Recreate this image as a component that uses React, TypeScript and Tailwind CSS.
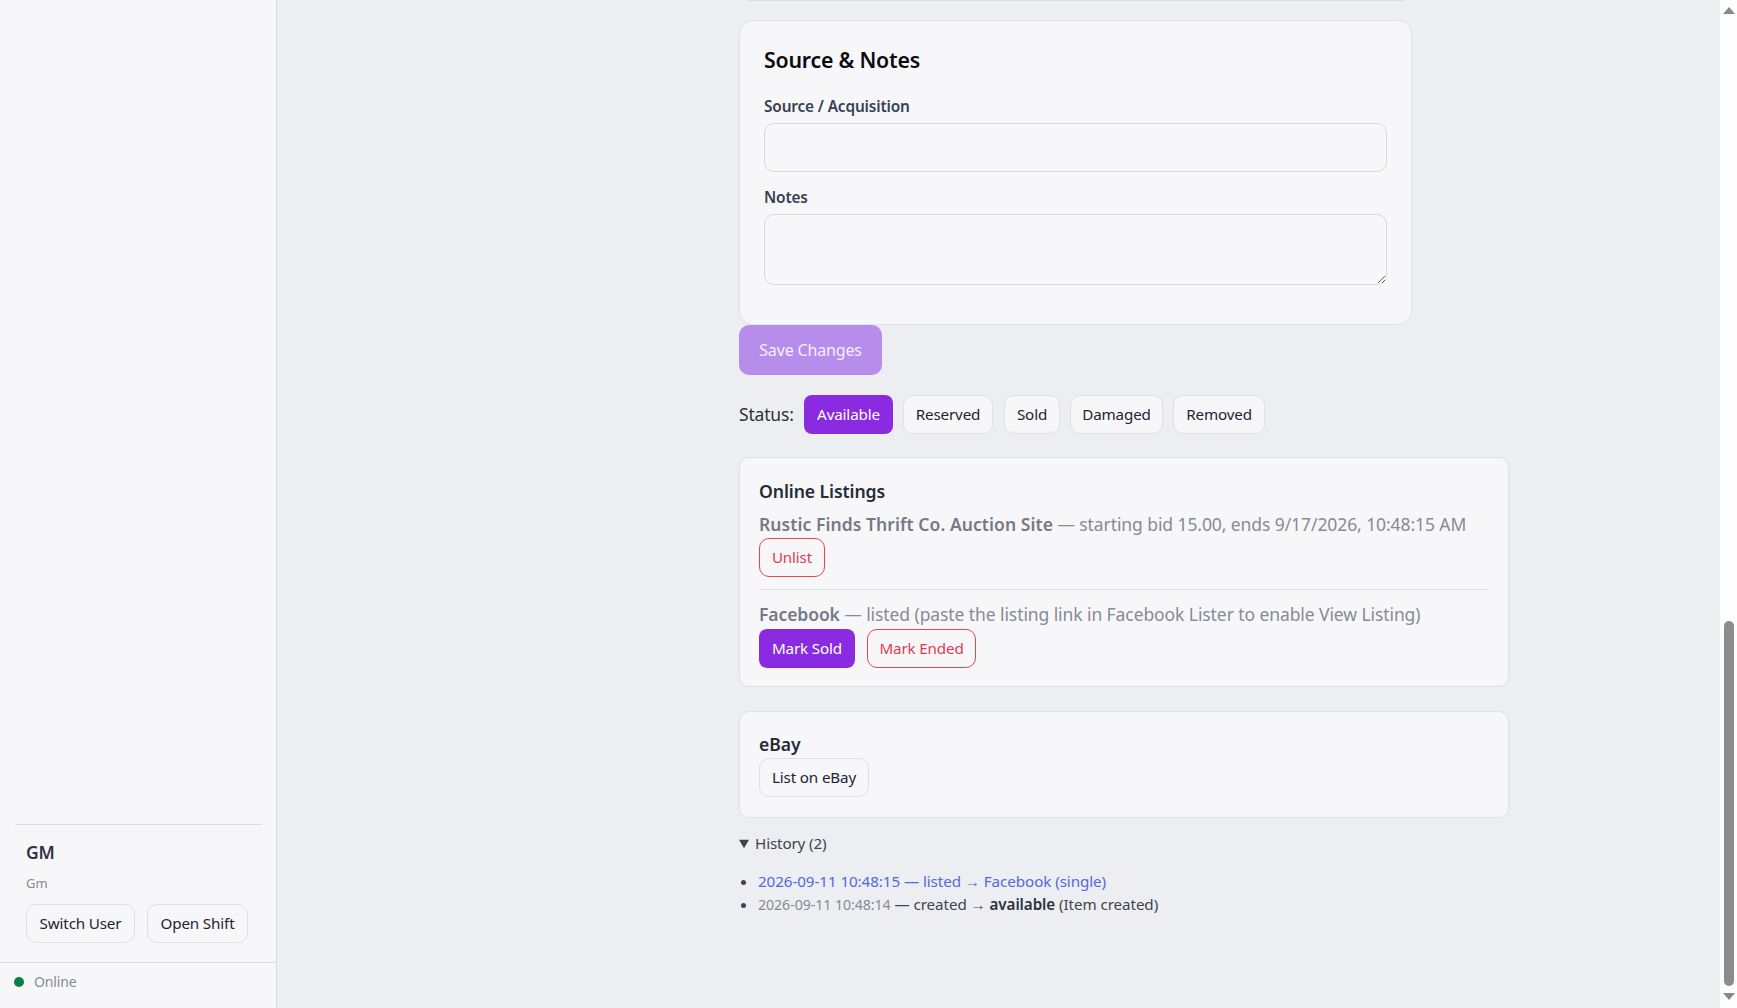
export default function App() {
  const fontFamily = { fontFamily: '"Noto Sans", "Liberation Sans", sans-serif' };
  return (
    <div className="flex h-screen w-full overflow-hidden bg-[#eceef2] text-[#1f2430]" style={fontFamily}>
      <aside className="flex h-full w-[277px] shrink-0 flex-col justify-end border-r border-[#dcdde2] bg-[#f7f7fa]">
        <div className="mr-[14px] ml-[15px] h-[138px] border-t border-[#dcdde2] pr-[12px] pl-[11px]">
          <div className="mt-[15px] h-[24px] text-[17.5px] leading-[24px] font-semibold tracking-[-0.01em] text-[#2f3344]">GM</div>
          <div className="mt-[7px] h-[24px] text-[13px] leading-[24px] text-[#868b94]">Gm</div>
          <div className="mt-[9px] flex gap-[12px]">
            <button className="h-[39px] w-[109px] rounded-[10px] border border-[#dfe0e5] bg-[#f7f7fa] text-[15.2px] tracking-[-0.01em] text-[#1f2430]">Switch User</button>
            <button className="h-[39px] w-[101px] rounded-[10px] border border-[#dfe0e5] bg-[#f7f7fa] text-[15.2px] tracking-[-0.01em] text-[#1f2430]">Open Shift</button>
          </div>
        </div>
        <div className="flex h-[46px] items-center gap-[10px] border-t border-[#dcdde2] pb-[8px] pl-[14px]">
          <span className="h-[10px] w-[10px] rounded-full bg-[#0a8043]" />
          <span className="text-[14px] tracking-[-0.01em] text-[#868b94]">Online</span>
        </div>
      </aside>

      <main className="h-full flex-1 pl-[462px]">
        <div className="ml-[9px] h-px w-[656px] bg-[#d9dbe0]" />
        <section className="mt-[19px] h-[305px] w-[673px] rounded-[14px] border border-[#e0e1e6] bg-[#f7f7fa] px-[24px] pt-[24px]">
          <h2 className="h-[30px] text-[21.3px] leading-[30px] font-semibold tracking-[-0.01em] text-[#0b0b10]">Source &amp; Notes</h2>
          <label className="mt-[20px] block h-[24px] text-[15.4px] leading-[24px] font-semibold tracking-[-0.01em] text-[#374151]">Source / Acquisition</label>
          <input className="mt-[4px] block h-[49px] w-full rounded-[10px] border border-[#d6d8de] bg-[#f7f7fa]" />
          <label className="mt-[14px] block h-[24px] text-[15.4px] leading-[24px] font-semibold tracking-[-0.01em] text-[#374151]">Notes</label>
          <textarea className="mt-[4px] block h-[71px] w-full rounded-[10px] border border-[#d6d8de] bg-[#f7f7fa]" />
        </section>
        <button className="mt-0 h-[50px] w-[143px] rounded-[10px] bg-[#b78dec] text-[16px] tracking-[-0.01em] text-[#f5f0fd]">Save Changes</button>

        <div className="mt-[20px] flex h-[39px] items-center">
          <span className="w-[65px] text-[17.5px] tracking-[-0.01em] text-[#2c3240]">Status:</span>
          <button className="h-[39px] w-[89px] rounded-[8px] bg-[#8a2be2] text-[15.2px] tracking-[-0.01em] text-white">Available</button>
          <button className="ml-[10px] h-[39px] w-[90px] rounded-[10px] border border-[#dfe0e5] bg-[#f7f7fa] text-[15.2px] tracking-[-0.01em]">Reserved</button>
          <button className="ml-[11px] h-[39px] w-[56px] rounded-[10px] border border-[#dfe0e5] bg-[#f7f7fa] text-[15.2px] tracking-[-0.01em]">Sold</button>
          <button className="ml-[10px] h-[39px] w-[93px] rounded-[10px] border border-[#dfe0e5] bg-[#f7f7fa] text-[15.2px] tracking-[-0.01em]">Damaged</button>
          <button className="ml-[10px] h-[39px] w-[92px] rounded-[10px] border border-[#dfe0e5] bg-[#f7f7fa] text-[15.2px] tracking-[-0.01em]">Removed</button>
        </div>

        <section className="mt-[23px] h-[230px] w-[770px] rounded-[10px] border border-[#e0e1e6] bg-[#f7f7fa] px-[19px] pt-[18px]">
          <h3 className="h-[30px] text-[17.6px] leading-[30px] font-semibold tracking-[-0.005em] text-[#262b37]">Online Listings</h3>
          <p className="mt-[5px] h-[27px] text-[17.5px] leading-[27px] tracking-[-0.005em] whitespace-nowrap text-[#868b94]">
            <strong className="font-semibold tracking-[0.004em] text-[#757a84]">Rustic Finds Thrift Co. Auction Site</strong> — starting bid 15.00, ends 9/17/2026, 10:48:15 AM
          </p>
          <button className="h-[39px] w-[66px] rounded-[10px] border border-[#e5484d] text-[15.2px] tracking-[-0.01em] text-[#e53950]">Unlist</button>
          <div className="mt-[12px] h-px w-[730px] bg-[#dfe0e5]" />
          <p className="mt-[11px] h-[28px] text-[17.5px] leading-[27px] tracking-[-0.005em] whitespace-nowrap text-[#868b94]">
            <strong className="font-semibold text-[#757a84]">Facebook</strong> — listed (paste the listing link in Facebook Lister to enable View Listing)
          </p>
          <div className="flex gap-[12px]">
            <button className="h-[39px] w-[96px] rounded-[8px] bg-[#8a2be2] text-[15.2px] tracking-[-0.01em] text-white">Mark Sold</button>
            <button className="h-[39px] w-[109px] rounded-[10px] border border-[#e5484d] text-[15.2px] tracking-[-0.01em] text-[#e53950]">Mark Ended</button>
          </div>
        </section>

        <section className="mt-[24px] h-[107px] w-[770px] rounded-[10px] border border-[#e0e1e6] bg-[#f7f7fa] px-[19px] pt-[19px]">
          <h3 className="h-[27px] text-[17.6px] leading-[27px] font-semibold tracking-[-0.005em] text-[#262b37]">eBay</h3>
          <button className="h-[39px] w-[110px] rounded-[10px] border border-[#dfe0e5] bg-[#f7f7fa] text-[15.2px] tracking-[-0.01em]">List on eBay</button>
        </section>

        <details open className="mt-[13px]">
          <summary className="h-[24px] text-[15.2px] leading-[24px] tracking-[-0.01em] text-[#3e4450]">History (2)</summary>
          <ul className="mt-[15px] list-disc pl-[19px] text-[15.2px] leading-[23px] tracking-[-0.005em] text-[#3e4450]">
            <li><span className="text-[#5468e0]">2026-09-11 10:48:15 — listed → Facebook (single)</span></li>
            <li>
              <span className="text-[14.2px] text-[#868b94]">2026-09-11 10:48:14</span> — created → <strong className="font-semibold text-[#2c3240]">available</strong> (Item created)
            </li>
          </ul>
        </details>
      </main>

      <div className="flex h-full w-[17px] shrink-0 flex-col items-center bg-[#fdfdfd] pl-[1px]">
        <svg width="12" height="7" viewBox="0 0 12 7" className="mt-[7px]"><path d="M6 0 12 7H0z" fill="#888" /></svg>
        <div className="mt-[607px] h-[365px] w-[10px] rounded-full bg-[#8c8c8c]" />
        <svg width="12" height="7" viewBox="0 0 12 7" className="mt-[7px]"><path d="M6 7 12 0H0z" fill="#888" /></svg>
      </div>
    </div>
  );
}
